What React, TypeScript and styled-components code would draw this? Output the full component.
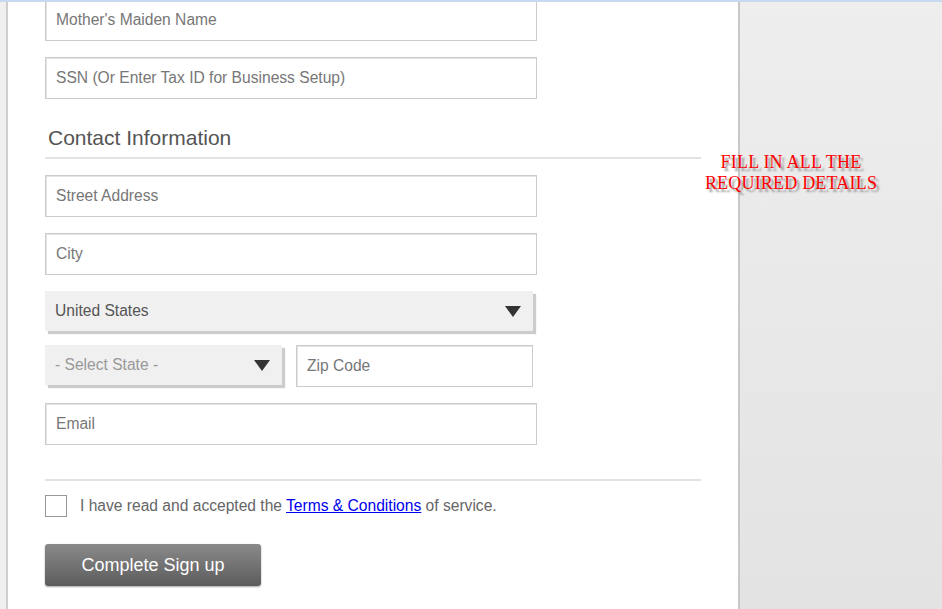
import * as React from 'react';
import styled, { createGlobalStyle } from 'styled-components';

const GlobalStyle = createGlobalStyle`
  html, body {
    margin: 0;
    padding: 0;
    height: 100%;
  }
  body {
    background: linear-gradient(to bottom, #eeeeee 0%, #e3e3e3 100%);
    font-family: 'Liberation Sans', Arial, sans-serif;
    overflow: hidden;
  }
`;

const TopBar = styled.div`
  position: fixed;
  top: 0;
  left: 0;
  right: 0;
  height: 2px;
  background: #c7daf0;
  z-index: 5;
`;

const Page = styled.div`
  position: relative;
  display: flex;
  min-height: 609px;
`;

const Gutter = styled.div`
  width: 6px;
  background: #f0f0f0;
`;

const Panel = styled.div`
  width: 656px;
  padding: 0 37px 30px;
  background: #fff;
  border-left: 2px solid #cfcfcf;
  border-right: 2px solid #c8c8c8;
  display: flex;
  flex-direction: column;
`;

const TextInput = styled.input<{ $width?: number; $first?: boolean; $flush?: boolean }>`
  box-sizing: border-box;
  width: ${p => p.$width ?? 492}px;
  height: 42px;
  margin-top: ${p => (p.$first ? '-1px' : p.$flush ? '0' : '16px')};
  padding: 0 10px;
  border: 1px solid #cccccc;
  box-shadow: inset 1px 1px 0 #e4e4e4;
  font-family: 'Liberation Sans', Arial, sans-serif;
  font-size: 15.6px;
  color: #555;
  outline: none;
  &::placeholder {
    color: #777;
  }
`;

const Heading = styled.h2`
  margin: 27px 0 0;
  padding: 0 0 7px 3px;
  font-size: 21px;
  line-height: 24px;
  font-weight: normal;
  color: #555;
  border-bottom: 2px solid #e3e3e3;
`;

const Row = styled.div<{ $top: number }>`
  display: flex;
  align-items: flex-start;
  gap: 14px;
  margin-top: ${p => p.$top}px;
`;

const SelectBox = styled.div<{ $width: number; $muted?: boolean }>`
  box-sizing: border-box;
  width: ${p => p.$width}px;
  height: 40px;
  padding: 0 12px 0 10px;
  display: flex;
  align-items: center;
  justify-content: space-between;
  background: #f0f0f0;
  box-shadow: 3px 3px 1px #cccccc;
  font-size: 15.6px;
  color: ${p => (p.$muted ? '#999' : '#555')};
`;

const Arrow = () => (
  <svg width="16" height="11" viewBox="0 0 16 11">
    <path d="M0 0 H16 L8 11 Z" fill="#333" />
  </svg>
);

const Divider = styled.div`
  margin-top: 34px;
  height: 2px;
  background: #e3e3e3;
`;

const TermsRow = styled.label`
  display: flex;
  align-items: center;
  gap: 13px;
  margin-top: 14px;
  font-size: 15.6px;
  color: #666;
`;

const Check = styled.span`
  box-sizing: border-box;
  width: 22px;
  height: 22px;
  border: 1px solid #999;
  background: #fff;
`;

const Link = styled.a`
  color: #0000ee;
  text-decoration: underline;
`;

const Button = styled.button`
  margin-top: 27px;
  width: 216px;
  height: 42px;
  border: none;
  border-radius: 3px;
  background: linear-gradient(to bottom, #8a8a8a 0%, #5c5c5c 100%);
  box-shadow: 0 1px 2px rgba(0, 0, 0, 0.35);
  color: #fff;
  font-family: 'Liberation Sans', Arial, sans-serif;
  font-size: 18px;
  cursor: pointer;
`;

const Notice = styled.div`
  position: absolute;
  left: 691px;
  top: 152px;
  width: 200px;
  text-align: center;
  font-family: 'Liberation Serif', 'Times New Roman', serif;
  font-size: 18px;
  line-height: 21px;
  letter-spacing: 0.2px;
  color: #ff0000;
  text-shadow: 3px 3px 2px #999;
`;

export default function App() {
  return (
    <>
      <GlobalStyle />
      <TopBar />
      <Page>
        <Gutter />
        <Panel>
          <TextInput $first placeholder="Mother's Maiden Name" />
          <TextInput placeholder="SSN (Or Enter Tax ID for Business Setup)" />
          <Heading>Contact Information</Heading>
          <TextInput placeholder="Street Address" />
          <TextInput placeholder="City" />
          <Row $top={16}>
            <SelectBox $width={488}>
              United States
              <Arrow />
            </SelectBox>
          </Row>
          <Row $top={14}>
            <SelectBox $width={237} $muted>
              - Select State -
              <Arrow />
            </SelectBox>
            <TextInput $width={237} $flush placeholder="Zip Code" />
          </Row>
          <TextInput placeholder="Email" />
          <Divider />
          <TermsRow>
            <Check />
            <span>
              I have read and accepted the <Link href="#">Terms &amp; Conditions</Link> of service.
            </span>
          </TermsRow>
          <div>
            <Button>Complete Sign up</Button>
          </div>
        </Panel>
        <Notice>
          FILL IN ALL THE
          <br />
          REQUIRED DETAILS
        </Notice>
      </Page>
    </>
  );
}
